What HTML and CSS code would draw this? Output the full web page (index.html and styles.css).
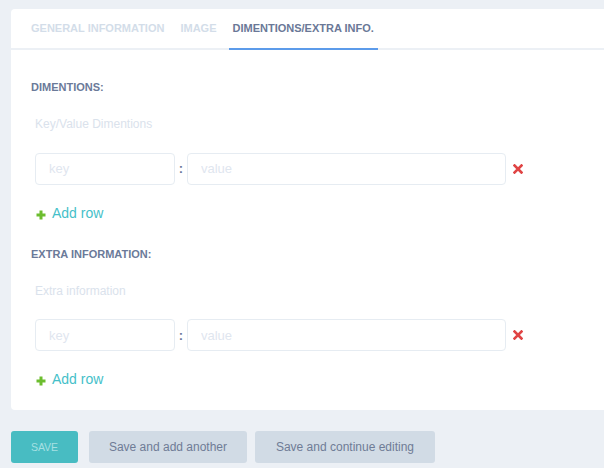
FILE: index.html
```html
<!DOCTYPE html>
<html>
<head>
<meta charset="utf-8">
<link rel="stylesheet" href="styles.css">
</head>
<body>
<div class="card">
  <ul class="tabs">
    <li class="tab">GENERAL INFORMATION</li>
    <li class="tab">IMAGE</li>
    <li class="tab active">DIMENTIONS/EXTRA INFO.</li>
  </ul>
  <div class="content">
    <h4 class="section-title">DIMENTIONS:</h4>
    <div class="field">
      <div class="field-label">Key/Value Dimentions</div>
      <div class="kv-row">
        <input class="input key" placeholder="key">
        <span class="colon">:</span>
        <input class="input value" placeholder="value">
        <svg class="remove" width="10" height="10" viewBox="0 0 10 10"><path d="M1.5 1.5 L8.5 8.5 M8.5 1.5 L1.5 8.5" stroke="#e04444" stroke-width="2.6" stroke-linecap="square"/></svg>
      </div>
      <div class="add-row">
        <svg class="plus" width="10" height="10" viewBox="0 0 10 10"><path d="M5 0.5 V9.5 M0.5 5 H9.5" stroke="#6cbd2e" stroke-width="3"/></svg>
        <span>Add row</span>
      </div>
    </div>
    <h4 class="section-title second">EXTRA INFORMATION:</h4>
    <div class="field">
      <div class="field-label">Extra information</div>
      <div class="kv-row">
        <input class="input key" placeholder="key">
        <span class="colon">:</span>
        <input class="input value" placeholder="value">
        <svg class="remove" width="10" height="10" viewBox="0 0 10 10"><path d="M1.5 1.5 L8.5 8.5 M8.5 1.5 L1.5 8.5" stroke="#e04444" stroke-width="2.6" stroke-linecap="square"/></svg>
      </div>
      <div class="add-row">
        <svg class="plus" width="10" height="10" viewBox="0 0 10 10"><path d="M5 0.5 V9.5 M0.5 5 H9.5" stroke="#6cbd2e" stroke-width="3"/></svg>
        <span>Add row</span>
      </div>
    </div>
  </div>
</div>
<div class="actions">
  <button class="btn btn-save">SAVE</button>
  <button class="btn btn-secondary first">Save and add another</button>
  <button class="btn btn-secondary second">Save and continue editing</button>
</div>
</body>
</html>
```
FILE: styles.css
```css
html, body {
  overflow: hidden;
}
body {
  margin: 0;
  padding: 9px 0 0 11px;
  background: #ecf0f5;
  font-family: "Liberation Sans", Arial, sans-serif;
}
.card {
  background: #fff;
  border-radius: 4px;
  margin-right: -20px;
}
.tabs {
  list-style: none;
  margin: 0;
  padding: 0 0 0 16px;
  display: flex;
  border-bottom: 2px solid #ecf0f5;
}
.tab {
  font-size: 11px;
  font-weight: bold;
  line-height: 13px;
  color: #d3dde9;
  padding: 13px 4px 13px;
  margin-right: 8px;
  margin-bottom: -2px;
  border-bottom: 2px solid transparent;
}
.tab.active {
  color: #6a7897;
  border-bottom-color: #5c9bea;
}
.content {
  padding: 31px 20px 21px 20px;
}
.section-title {
  margin: 0;
  font-size: 11px;
  font-weight: bold;
  line-height: 13px;
  color: #6b7a99;
}
.section-title.second {
  margin-top: 25px;
}
.field {
  padding-left: 4px;
}
.field-label {
  margin-top: 23px;
  font-size: 12px;
  line-height: 14px;
  color: #dae2ec;
}
.kv-row {
  margin-top: 21.5px;
  display: flex;
  align-items: center;
  height: 32px;
}
.input {
  box-sizing: border-box;
  height: 32px;
  border: 1px solid #e6ecf2;
  border-radius: 4px;
  padding: 0 13px;
  font-family: "Liberation Sans", Arial, sans-serif;
  font-size: 13px;
  color: #6b7a99;
  outline: none;
}
.input::placeholder {
  color: #dfe6ef;
}
.input.key {
  width: 140px;
}
.input.value {
  width: 319px;
}
.colon {
  width: 12px;
  text-align: center;
  font-size: 13px;
  font-weight: bold;
  color: #6b7a99;
}
.remove {
  margin-left: 7px;
}
.add-row {
  margin-top: 18px;
  display: flex;
  align-items: center;
  height: 20px;
  font-size: 14px;
  color: #45bfc9;
  padding-left: 1px;
}
.plus {
  margin-right: 6px;
  margin-top: 4px;
}
.actions {
  margin-top: 21px;
  display: flex;
}
.btn {
  height: 32px;
  border: none;
  border-radius: 3px;
  padding: 0;
  white-space: nowrap;
  text-align: center;
  font-family: "Liberation Sans", Arial, sans-serif;
  font-size: 12px;
}
.btn-save {
  background: #48bcc2;
  color: #a6e0e3;
  font-size: 10.5px;
  width: 67px;
}
.btn-secondary {
  background: #d1dbe5;
  color: #6f7c96;
  margin-left: 8px;
}
.btn-secondary.first {
  margin-left: 11px;
  width: 158px;
}
.btn-secondary.second {
  width: 180px;
}
```
